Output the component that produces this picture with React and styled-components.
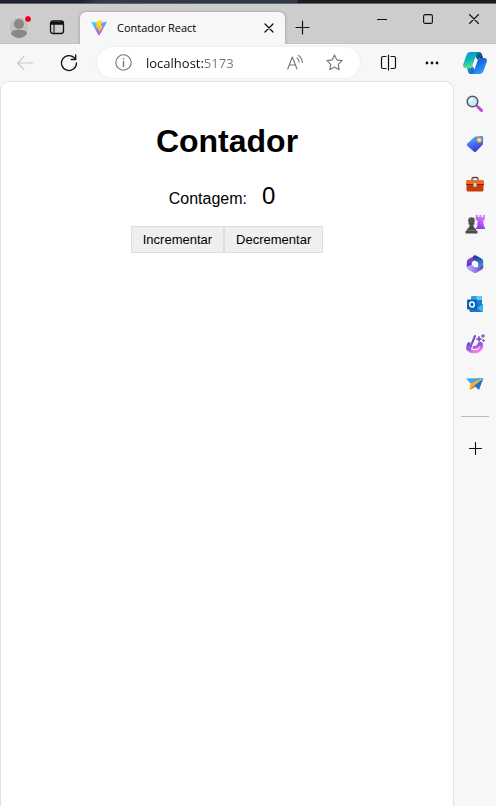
import React, { useState } from "react";
import styled, { createGlobalStyle } from "styled-components";

const GlobalStyle = createGlobalStyle`
  * { box-sizing: border-box; }
  body { margin: 0; background: #f7f7f7; font-family: "Open Sans", "Noto Sans", sans-serif; }
  svg { display: block; }
`;

const Window = styled.div`
  display: flex;
  flex-direction: column;
  min-height: 100vh;
`;

const TopEdge = styled.div`
  height: 4px;
  border-bottom: 1px solid #666;
  background: linear-gradient(90deg, #1d2333 0, #1b2233 16%, #323a4b 20%, #2e3747 60%, #1c1c1c 60%);
`;

const TabBar = styled.header`
  display: flex;
  align-items: flex-end;
  height: 40px;
  background: #cdcdcd;
  border-bottom: 1px solid #c4c4c4;
`;

const IconButton = styled.button`
  display: flex;
  align-items: center;
  justify-content: center;
  flex: none;
  width: ${(p) => p.$width || 32}px;
  height: ${(p) => p.$height || 32}px;
  padding: 0;
  border: 0;
  background: transparent;
  color: ${(p) => p.$color || "#111"};
`;

const TabTools = styled.div`
  display: flex;
  gap: 6px;
  width: 80px;
  padding-left: 3px;
`;

const Tab = styled.div`
  display: flex;
  align-items: center;
  flex: 0 1 205px;
  height: 32px;
  margin-bottom: -1px;
  padding: 0 4px 0 11px;
  border-radius: 6px 6px 0 0;
  background: #f7f7f7;
  box-shadow: 0 0 3px rgba(0, 0, 0, 0.3);
  clip-path: inset(-3px -3px 0 -3px);
`;

const TabTitle = styled.span`
  flex: 1;
  padding-left: 10px;
  font-size: 11px;
  line-height: 16px;
  white-space: nowrap;
  color: #000;
`;

const WindowControls = styled.div`
  display: flex;
  align-self: flex-start;
  gap: 2px;
  margin-left: auto;
`;

const Body = styled.div`
  display: flex;
  flex: 1;
`;

const Main = styled.div`
  display: flex;
  flex-direction: column;
  flex: 1;
  min-width: 0;
`;

const Toolbar = styled.nav`
  display: flex;
  align-items: center;
  gap: 12px;
  height: 37px;
  padding: 0 6px 0 9px;
`;

const AddressBar = styled.div`
  display: flex;
  align-items: center;
  flex: 1;
  min-width: 0;
  height: 31px;
  padding: 0 10px;
  border-radius: 16px;
  background: #fff;
  box-shadow: 0 0 2px rgba(0, 0, 0, 0.1);
`;

const AddressInput = styled.input`
  flex: 1;
  min-width: 0;
  height: 24px;
  margin-left: 7px;
  padding: 0;
  border: 0;
  outline: 0;
  font: 13px "Open Sans", "Noto Sans", sans-serif;
  color: transparent;
  caret-color: #111;
  background: linear-gradient(90deg, #111 58px, #767676 58px);
  background-clip: text;
`;

const AddressActions = styled.div`
  display: flex;
  gap: 7px;
`;

const ToolbarActions = styled.div`
  display: flex;
  gap: 12px;
`;

const Page = styled.main`
  display: flex;
  flex-direction: column;
  align-items: center;
  flex: 1;
  padding: 41px 16px;
  border: 1px solid #e2e2e2;
  border-bottom: 0;
  border-radius: 9px 9px 0 0;
  background: #fff;
  font-family: "Liberation Sans", Arial, sans-serif;
  color: #000;
`;

const Title = styled.h1`
  margin: 0;
  font-size: 32px;
  line-height: 36px;
`;

const Counter = styled.p`
  display: flex;
  align-items: baseline;
  gap: 15px;
  margin: 23px 0 13px;
  padding-right: 10px;
  font-size: 16px;
  line-height: 28px;
`;

const Count = styled.output`
  font-size: 24px;
`;

const ButtonGroup = styled.div`
  display: flex;
`;

const CounterButton = styled.button`
  height: 27px;
  padding: 0 11px;
  border: 1px solid #dcdcdc;
  background: #efefef;
  font: 13px "Liberation Sans", Arial, sans-serif;
  color: #000;
`;

const Sidebar = styled.aside`
  display: flex;
  flex-direction: column;
  align-items: center;
  flex: none;
  width: 42px;
  padding-top: 3px;
`;

const SidebarApps = styled.div`
  display: flex;
  flex-direction: column;
  gap: 8px;
  padding-top: 9px;
`;

const Divider = styled.hr`
  width: 28px;
  height: 1px;
  margin: 16px 0 15px;
  border: 0;
  background: #bcbcbc;
`;

const Line = ({ w = 16, h = w, sw = 1, children }) => (
  <svg width={w} height={h} viewBox={`0 0 ${w} ${h}`} fill="none" stroke="currentColor" strokeWidth={sw} strokeLinecap="round" strokeLinejoin="round" aria-hidden="true">
    {children}
  </svg>
);

const Picture = ({ size = 18, box = 18, children }) => (
  <svg width={size} height={size} viewBox={`0 0 ${box} ${box}`} aria-hidden="true">{children}</svg>
);

const Gradient = ({ id, from, mid, to, angle = 45 }) => (
  <linearGradient id={id} gradientTransform={`rotate(${angle} .5 .5)`}>
    <stop stopColor={from} />
    {mid && <stop offset=".5" stopColor={mid} />}
    <stop offset="1" stopColor={to} />
  </linearGradient>
);

const Avatar = () => (
  <Picture size={24} box={24}>
    <circle cx="12" cy="12" r="10.5" fill="#c4c1be" stroke="#dcdad6" />
    <circle cx="12" cy="9" r="5" fill="#8b8783" />
    <path d="M4 19c0-3 3-4.200 8-4.200s8 1.200 8 4.200c-2 2.600-5 4-8 4s-6-1.400-8-4z" fill="#8b8783" />
    <circle cx="21" cy="4" r="3.500" fill="#e60012" stroke="#e4e4e4" />
  </Picture>
);

const WorkspaceIcon = () => (
  <Line w={16} h={16} sw={1.3}>
    <rect x="1.500" y="2" width="13" height="12.500" rx="2.500" />
    <path d="M2 3.500h12v1.500H2z" fill="currentColor" />
    <path d="M5 5.500v8.500" strokeWidth="1" />
  </Line>
);

const ViteLogo = () => (
  <Picture size={16} box={16}>
    <defs>
      <Gradient id="vite" from="#41d1ff" to="#bd34fe" angle={60} />
      <Gradient id="bolt" from="#ffd83a" mid="#ffcb20" to="#ffa800" angle={80} />
    </defs>
    <path d="M.3 2.300l7.300 12.900c.2.300.6.300.8 0L15.800 2.300c.2-.3-.1-.7-.5-.6L8 3 .800 1.700c-.4-.1-.7.3-.5.6z" fill="url(#vite)" />
    <path d="M11.600 0L5.600 1.200 5.200 7.600l2.200-.4-.7 3.200 1.700-.4-1 4.300 4.900-8.600-2.500.4z" fill="url(#bolt)" />
  </Picture>
);

const CopilotIcon = () => (
  <Picture size={24} box={24}>
    <defs>
      <Gradient id="cpA" from="#0895d8" mid="#14b8bd" to="#6be482" angle={80} />
      <Gradient id="cpB" from="#164fc4" mid="#1e77e8" to="#28a8f0" angle={60} />
      <Gradient id="cpC" from="#08839f" to="#12355e" />
      <Gradient id="cpD" from="#17a2c9" to="#1758d3" />
    </defs>
    <path d="M12 1h4c2 0 2.600 1 3 2.400L20 7h-2c-1.500 0-2.500.5-3.200 2L12.500 6z" fill="url(#cpC)" />
    <path d="M12 23H8c-2 0-2.600-1-3-2.400L4 17h2c1.500 0 2.500-.5 3.200-2l2.300 3z" fill="url(#cpD)" />
    <path d="M7.500 1h8c-1.500.5-2 1.500-2.500 3L9.500 14c-.8 2.200-2 3-3.500 3H2.500C.5 17-.3 15.300.3 13L3.500 4C4.200 2 5.500 1 7.500 1z" fill="url(#cpA)" />
    <path d="M16.500 23h-8c1.500-.5 2-1.500 2.500-3l3.500-10c.8-2.200 2-3 3.500-3h3.500c2 0 2.800 1.700 2.200 4l-3.200 9c-.7 2-2 3-4 3z" fill="url(#cpB)" />
  </Picture>
);

const SearchIcon = () => (
  <Picture>
    <path d="M10.500 10.500l2 2" stroke="#777" strokeWidth="2" />
    <path d="M12 12l3.500 3.500" stroke="#cf3cf0" strokeWidth="3" strokeLinecap="round" />
    <circle cx="6.500" cy="6.500" r="5.300" fill="#c7e9fa" stroke="#59565a" strokeWidth="1.500" />
    <path d="M4 7a3 3 0 013-3" stroke="#fff" fill="none" strokeWidth="1.300" />
  </Picture>
);

const TagIcon = () => (
  <Picture>
    <defs><Gradient id="tag" from="#65a6fc" mid="#416cf4" to="#4432cf" angle={70} /></defs>
    <path d="M9.500 1.500l6-.5c1 0 1.800.7 1.700 1.700l-.3 6.200c0 .5-.2.900-.5 1.200l-6.300 6.300c-.7.7-1.600.7-2.300 0L1.400 10.900c-.7-.7-.7-1.600 0-2.300L8.300 2c.4-.3.700-.5 1.200-.5z" fill="url(#tag)" />
    <circle cx="13.300" cy="5" r="1.800" fill="#e9eefc" stroke="#f9c21b" strokeWidth="1.500" />
  </Picture>
);

const ToolboxIcon = () => (
  <Picture>
    <path d="M6 5.500V4Q6 2.500 7.500 2.500h3Q12 2.500 12 4v1.500" fill="none" stroke="#5a4843" strokeWidth="1.300" />
    <path d="M1.500 5h15q1.500 0 1.500 1.500V10H0V6.500Q0 5 1.500 5z" fill="#f26a2a" />
    <path d="M.5 9.500h17V15q0 1.500-1.500 1.500H2Q.5 16.500.5 15z" fill="#c83c0c" />
    <path d="M0 9.500h18" stroke="#7d2d13" />
    <rect x="7.300" y="7.500" width="3.400" height="4.500" rx="1.500" fill="#d8d5d3" stroke="#777" strokeWidth=".5" />
  </Picture>
);

const ChessIcon = () => (
  <Picture size={20} box={20}>
    <defs><Gradient id="rook" from="#8c35e8" to="#e482ff" angle={-70} /></defs>
    <path d="M10.700 1h2v2h1.700V1h2v2H18V1h2v4.200L18.300 7l.7 5.500 1 .8V15h-9.300l1.500-2.500.5-5.500-2-1.800z" fill="url(#rook)" />
    <circle cx="6.500" cy="6.500" r="3.300" fill="#555" />
    <path d="M3.500 9h6v1.500H8.300c.1 2 1 3.500 2.700 4.500v1.200l1.500.8v2.500H.5V17l1.500-.8V15c1.700-1 2.600-2.500 2.700-4.500H3.500z" fill="#4b4b4c" />
    <path d="M2 16.300h9" stroke="#858585" strokeWidth=".7" />
  </Picture>
);

const OfficeIcon = () => (
  <Picture>
    <defs>
      <Gradient id="ofA" from="#a64ee6" to="#4431a1" angle={80} />
      <Gradient id="ofB" from="#193a93" to="#4aa3e8" angle={80} />
      <Gradient id="ofC" from="#b9b7f8" mid="#9181ed" to="#623cc8" angle={0} />
    </defs>
    <path d="M9.500.2L2.500 4Q.8 5 .8 7v6l5-2.500V7L11 4z" fill="url(#ofA)" />
    <path d="M7.500.8q1.500-.9 3 0l5 2.800Q17.200 4.600 17.200 6.600v6L12 14V7.500L6.500 4z" fill="url(#ofB)" />
    <path d="M.8 12l5-2.500 4.500 3 6.900-2v1.800q0 1.500-1.300 2.300l-5.100 2.900q-1.800 1-3.600 0L2 14.500Q.8 13.700.8 12z" fill="url(#ofC)" />
    <path d="M9.300 6l2.800 1.600v3.200l-2.800 1.700-2.900-1.700V7.600z" fill="#f7f7f7" />
  </Picture>
);

const OutlookIcon = () => (
  <Picture>
    <path d="M5 2q0-1 1-1h9q1 0 1 1v8H5z" fill="#2d9fe6" />
    <path d="M10.500 1H15q1 0 1 1v3h-5.500z" fill="#61cdfa" />
    <path d="M10.500 5H16v5h-5.500z" fill="#1480cf" />
    <path d="M3.500 9H17v7q0 1-1 1H4.500q-1 0-1-1z" fill="#1a75ca" />
    <path d="M17 9v7q0 1-1 1l-5-4z" fill="#37b6f2" />
    <rect x="1" y="4.500" width="10" height="10" rx="1" fill="#0864b8" />
    <ellipse cx="6" cy="9.500" rx="2.300" ry="2.600" fill="none" stroke="#fff" strokeWidth="1.500" />
  </Picture>
);

const DropIcon = () => (
  <Picture size={20} box={20}>
    <defs><Gradient id="drop" from="#7b48d9" mid="#b55be9" to="#f57df2" angle={60} /></defs>
    <path d="M4 9.500c-3 5 .5 8.300 5 8.300 5.500 0 8.500-3.800 7.500-7.600-.4-1.200-2-1.200-2.500 0-.8 2.300-2.200 3.500-5 3.300" fill="none" stroke="url(#drop)" strokeWidth="3" strokeLinecap="round" />
    <path d="M10 2L5 14" stroke="#7448cd" strokeWidth="2" strokeLinecap="round" />
    <circle cx="3.800" cy="14.500" r="2.500" fill="#9360df" />
    <path d="M14 2l.8 2.200L17 5l-2.200.8L14 8l-.8-2.200L11 5l2.200-.8zM18 0l.5 1.500L20 2l-1.500.5L18 4l-.5-1.500L16 2l1.500-.5zM18.500 5l.3 1.200 1.200.3-1.200.3-.3 1.200-.3-1.200-1.200-.3 1.200-.3z" fill="#7044c9" stroke="#7044c9" strokeWidth=".5" />
  </Picture>
);

const PlaneIcon = () => (
  <Picture>
    <path d="M0 3.500L17.500 3 5 9z" fill="#3fa9ef" />
    <path d="M8 10.500L17.500 3 13 15z" fill="#1977cb" />
    <path d="M4.500 8.500L17.500 3 8 10.500l-4.500 4.500z" fill="#ffad18" />
    <path d="M3.500 15L8 10.500l1.500 1.200z" fill="#c76b13" />
  </Picture>
);

const apps = [
  ["Pesquisar", SearchIcon],
  ["Compras", TagIcon],
  ["Ferramentas", ToolboxIcon],
  ["Jogos", ChessIcon],
  ["Microsoft 365", OfficeIcon],
  ["Outlook", OutlookIcon],
  ["Designer", DropIcon],
  ["Drop", PlaneIcon],
];

export default function App() {
  const [count, setCount] = useState(0);
  const [address, setAddress] = useState("localhost:5173");

  return (
    <Window>
      <GlobalStyle />
      <TopEdge />
      <TabBar>
        <TabTools>
          <IconButton aria-label="Perfil"><Avatar /></IconButton>
          <IconButton aria-label="Workspaces"><WorkspaceIcon /></IconButton>
        </TabTools>
        <Tab>
          <ViteLogo />
          <TabTitle>Contador React</TabTitle>
          <IconButton $width={24} $height={24} aria-label="Fechar guia">
            <Line w={10} sw={1.3}><path d="M1 1l8 8M9 1L1 9" /></Line>
          </IconButton>
        </Tab>
        <IconButton $width={35} aria-label="Nova guia">
          <Line w={15} sw={1.2}><path d="M7.500 1v13M1 7.500h13" /></Line>
        </IconButton>
        <WindowControls>
          <IconButton $width={44} $height={30} aria-label="Minimizar">
            <Line w={10}><path d="M0 5.500h10" /></Line>
          </IconButton>
          <IconButton $width={44} $height={30} aria-label="Maximizar">
            <Line w={10} sw={1.1}><rect x=".6" y=".6" width="8.800" height="8.800" rx="1.500" /></Line>
          </IconButton>
          <IconButton $width={44} $height={30} aria-label="Fechar">
            <Line w={10} sw={1.1}><path d="M.5.5l9 9M9.500.5l-9 9" /></Line>
          </IconButton>
        </WindowControls>
      </TabBar>
      <Body>
        <Main>
          <Toolbar>
            <IconButton $color="#c8c8c8" aria-label="Voltar">
              <Line w={16} sw={1.1}><path d="M15.500 8H.8M7 1.500L.5 8 7 14.500" /></Line>
            </IconButton>
            <IconButton aria-label="Atualizar">
              <Line w={18} sw={1.3}><path d="M16.500 9A7.500 7.500 0 1 1 14.900 4.400M15.700 1v4.500h-4.500" /></Line>
            </IconButton>
            <AddressBar>
              <IconButton $color="#767676" aria-label="Informações do site">
                <Line w={17} sw={1.1}><circle cx="8.500" cy="8.500" r="7.700" /><path d="M8.500 7.500v5M8.500 4.700v.4" strokeWidth="1.400" /></Line>
              </IconButton>
              <AddressInput aria-label="Endereço" value={address} onChange={(e) => setAddress(e.target.value)} />
              <AddressActions>
                <IconButton $color="#767676" aria-label="Ler em voz alta">
                  <Line w={16} sw={1.1}><path d="M.7 14L5.300 2l4.700 12M2.400 10h6M10 3a5 5 0 012 4M11.500.5a9 9 0 013.800 7" /></Line>
                </IconButton>
                <IconButton $color="#767676" aria-label="Adicionar aos favoritos">
                  <Line w={17} sw={1.1}><path d="M8.500 1l2.300 4.900 5.300.7-3.900 3.700 1 5.400-4.700-2.600-4.700 2.600 1-5.400L.9 6.600l5.300-.7z" /></Line>
                </IconButton>
              </AddressActions>
            </AddressBar>
            <ToolbarActions>
              <IconButton aria-label="Tela dividida">
                <Line w={17} sw={1.2}><path d="M6 2.500H3Q1.500 2.500 1.500 4v9q0 1.500 1.500 1.500h3M11 2.500h3q1.500 0 1.500 1.500v9q0 1.500-1.500 1.500h-3M8.500 1v15" /></Line>
              </IconButton>
              <IconButton aria-label="Configurações e mais">
                <Line w={16} sw={0}><g fill="currentColor"><circle cx="3" cy="8" r="1.400" /><circle cx="8" cy="8" r="1.400" /><circle cx="13" cy="8" r="1.400" /></g></Line>
              </IconButton>
            </ToolbarActions>
          </Toolbar>
          <Page>
            <Title>Contador</Title>
            <Counter>Contagem: <Count>{count}</Count></Counter>
            <ButtonGroup>
              <CounterButton onClick={() => setCount(count + 1)}>Incrementar</CounterButton>
              <CounterButton onClick={() => setCount(count - 1)}>Decrementar</CounterButton>
            </ButtonGroup>
          </Page>
        </Main>
        <Sidebar>
          <IconButton aria-label="Copilot"><CopilotIcon /></IconButton>
          <SidebarApps>
            {apps.map(([name, Icon]) => (
              <IconButton key={name} aria-label={name}><Icon /></IconButton>
            ))}
          </SidebarApps>
          <Divider />
          <IconButton aria-label="Personalizar">
            <Line w={13} sw={1.1}><path d="M6.500.5v12M.5 6.500h12" /></Line>
          </IconButton>
        </Sidebar>
      </Body>
    </Window>
  );
}
